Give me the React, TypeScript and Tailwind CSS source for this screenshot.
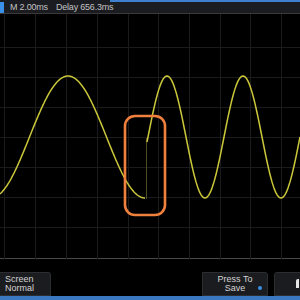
import React from "react";

const sans = { fontFamily: '"Liberation Sans", Arial, sans-serif' };

// grid / trace geometry, in svg coords (top of plot = page y 15)
const vLines = [4, 35, 66, 97, 128, 158, 189, 220, 250, 281];
const hLines = [33, 63, 93, 123, 153, 183, 213];

function tracePath() {
  const pts: string[] = [];
  for (let x = 0; x <= 145; x++) {
    const y = 123 - 61 * Math.cos((2 * Math.PI * (x - 68)) / 154);
    pts.push(`${pts.length ? "L" : "M"}${x},${y.toFixed(1)}`);
  }
  let first = true;
  for (let x = 147; x <= 300; x++) {
    const y = 123 - 61 * Math.sin((2 * Math.PI * (x - 148)) / 76);
    pts.push(`${first ? "M" : "L"}${x},${y.toFixed(1)}`);
    first = false;
  }
  return pts.join(" ");
}

function SoftKey({ lines, dot }: { lines: string[]; dot?: boolean }) {
  return (
    <div className="relative h-full flex flex-col justify-center bg-[#1b1c1f] border border-[#2c2d31] rounded-tr-[3px] text-[9px] leading-[9.5px] text-[#d4d4d4]">
      {lines.map((l) => (
        <span key={l}>{l}</span>
      ))}
      {dot && <span className="absolute right-[5px] top-[13px] w-[4px] h-[4px] rounded-full bg-[#3b8ee8]" />}
    </div>
  );
}

export default function App() {
  return (
    <div className="w-[300px] h-[300px] bg-black flex flex-col overflow-hidden" style={sans}>
      {/* status bar */}
      <div className="flex h-[2px]">
        <div className="w-[110px] bg-[#1b1c21]" />
        <div className="flex-1 bg-[#3f7fcf]" />
      </div>
      <div className="h-[12px] flex items-center bg-[#1b1c21] border-b border-[#3b3a38]">
        <div className="w-[4px] h-full bg-[#3a8fe6]" />
        <span className="ml-[6px] text-[9px] leading-none text-[#c2c2c2] tracking-[-0.2px]">M 2.00ms</span>
        <span className="ml-[8px] text-[9px] leading-none text-[#c2c2c2] tracking-[-0.2px]">Delay 656.3ms</span>
      </div>

      {/* scope grid */}
      <div className="h-[245px] border-b border-[#4a4a4a]">
        <svg width="300" height="245" viewBox="0 0 300 245" className="block">
          {vLines.map((x) => (
            <line key={"v" + x} x1={x + 0.5} y1={0} x2={x + 0.5} y2={245} stroke="#1b1b1b" strokeWidth={1} />
          ))}
          {hLines.map((y) => (
            <line key={"h" + y} x1={0} y1={y + 0.5} x2={300} y2={y + 0.5} stroke="#1b1b1b" strokeWidth={1} />
          ))}
          <line x1={146.5} y1={124} x2={146.5} y2={185} stroke="#4e4c26" strokeWidth={1} />
          <path d={tracePath()} fill="none" stroke="#cbc73a" strokeWidth={1.5} strokeLinejoin="round" />
          <rect x={125} y={102} width={40} height={99} rx={10} fill="none" stroke="#f0803e" strokeWidth={2.6} />
        </svg>
      </div>

      {/* soft keys */}
      <div className="flex-1 flex items-end">
        <div className="h-[24px] w-full flex gap-[6px]">
          <div className="w-[51px] h-full pl-[5px] bg-[#1b1c1f] border border-[#2c2d31] border-l-0 rounded-tr-[3px] flex flex-col justify-center text-[9px] leading-[9.5px] text-[#d4d4d4]">
            <span>Screen</span>
            <span>Normal</span>
          </div>
          <div className="flex-1" />
          <div className="w-[66px] h-full text-center">
            <SoftKey lines={["Press To", "Save"]} dot />
          </div>
          <div className="w-[28px] h-full -mr-[2px] relative bg-[#1b1c1f] border border-[#2c2d31] rounded-tl-[3px]">
            <span className="absolute left-[21px] top-[6px] w-[3px] h-[9px] bg-[#e6e6e6] rounded-tl-[2px]" />
          </div>
        </div>
      </div>
      <div className="h-[4px] bg-[#3a78c2]" />
    </div>
  );
}
